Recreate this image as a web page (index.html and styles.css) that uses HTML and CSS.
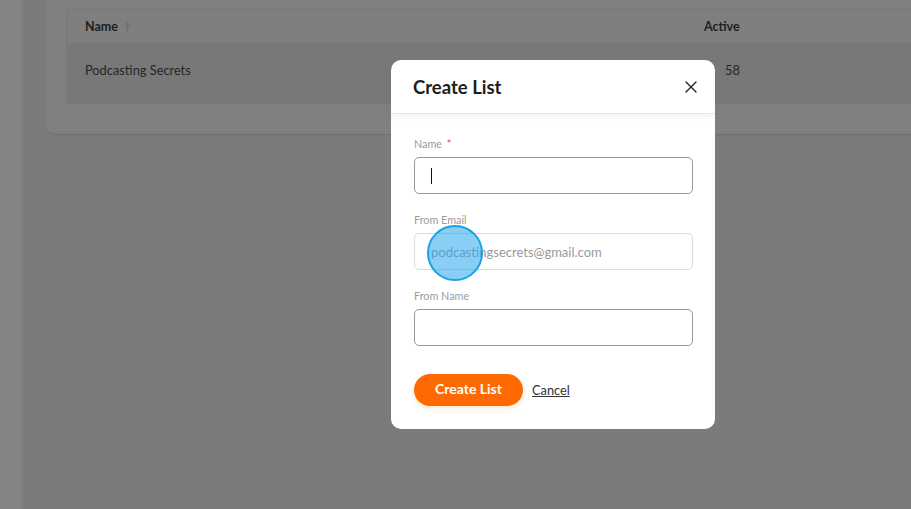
FILE: index.html
```html
<!DOCTYPE html>
<html>
<head>
<meta charset="utf-8">
<link rel="stylesheet" href="styles.css">
</head>
<body>
<div class="page">
  <aside class="side"></aside>
  <main class="main">
    <section class="card">
      <div class="table">
        <div class="thead">
          <div class="th th-name">Name <span class="sort">↑</span></div>
          <div class="th th-active">Active</div>
        </div>
        <div class="trow">
          <div class="td">Podcasting Secrets</div>
          <div class="td td-num">58</div>
        </div>
      </div>
    </section>
  </main>
</div>

<div class="modal">
  <div class="modal-head">
    <h2 class="modal-title">Create List</h2>
    <button class="close" aria-label="Close">
      <svg width="12" height="12" viewBox="0 0 12 12"><path d="M1 1L11 11M11 1L1 11" stroke="#222" stroke-width="1.4" stroke-linecap="round"/></svg>
    </button>
  </div>
  <div class="modal-body">
    <div class="field">
      <label class="label">Name <span class="req">*</span></label>
      <div class="input active"><span class="caret"></span></div>
    </div>
    <div class="field">
      <label class="label">From Email</label>
      <div class="input light"><span class="ph">podcastingsecrets@gmail.com</span></div>
    </div>
    <div class="field">
      <label class="label">From Name</label>
      <div class="input"></div>
    </div>
    <div class="actions">
      <button class="btn">Create List</button>
      <a class="cancel">Cancel</a>
    </div>
  </div>
</div>
<div class="click-dot"></div>
</body>
</html>
```

FILE: styles.css
```css
* { box-sizing: border-box; }
html, body { margin: 0; padding: 0; }
body {
  width: 911px;
  height: 509px;
  overflow: hidden;
  background: #7b7b7c;
  font-family: "Lato", "Noto Sans", sans-serif;
  position: relative;
}
.page { display: flex; height: 509px; }
.side { width: 22px; background: #838384; flex: none; }
.main { flex: 1; padding-left: 23px; overflow: hidden; }
.card {
  margin-top: -20px;
  margin-right: -40px;
  padding: 29px 0 30px 21px;
  background: #808080;
  border-radius: 10px;
  box-shadow: 0 1px 2px rgba(0,0,0,0.12);
}
.thead {
  display: flex;
  align-items: center;
  height: 35px;
  border: 1px solid #787878;
  border-radius: 8px 0 0 0;
  border-right: none;
  background: #7f7f7f;
}
.th {
  font-size: 12.5px;
  font-weight: 700;
  color: #1e1e1e;
}
.th-name { padding-left: 18px; width: 637px; }
.sort { color: #6a6a6a; font-weight: 400; font-size: 11px; margin-left: 2px; }
.trow {
  display: flex;
  align-items: flex-start;
  height: 60px;
  background: #787879;
  padding-top: 18px;
}
.td { font-size: 12.8px; color: #262626; }
.trow .td:first-child { padding-left: 19px; width: 659px; }

.modal {
  position: absolute;
  left: 391px;
  top: 60px;
  width: 324px;
  height: 369px;
  background: #fff;
  border-radius: 10px;
  display: flex;
  flex-direction: column;
}
.modal-head {
  height: 54px;
  display: flex;
  align-items: center;
  justify-content: space-between;
  padding: 0 17px 0 22px;
  border-bottom: 1px solid #e6e6e6;
  box-shadow: 0 3px 6px rgba(0,0,0,0.05);
  border-radius: 10px 10px 0 0;
}
.modal-title {
  margin: 0;
  font-size: 18.5px;
  font-weight: 700;
  color: #1d1d1d;
}
.close {
  border: 0;
  background: none;
  padding: 0;
  width: 14px;
  height: 14px;
  display: flex;
  align-items: center;
  justify-content: center;
}
.modal-body { padding: 23px 22px 0 23px; }
.field { margin-bottom: 19px; }
.label {
  display: block;
  height: 14px;
  line-height: 14px;
  font-size: 10.8px;
  color: #9b9b9b;
  margin-bottom: 6px;
}
.req { color: #e0425a; margin-left: 2px; }
.input {
  height: 37px;
  border: 1px solid #999a9b;
  border-radius: 5px;
  display: flex;
  align-items: center;
  padding-left: 16px;
}
.input.light { border-color: #dcdcdc; }
.caret { width: 1px; height: 16px; background: #111; }
.ph { font-size: 13px; color: #9a9a9a; padding-top: 1px; }
.actions {
  margin-top: 28px;
  display: flex;
  align-items: center;
  gap: 9px;
}
.btn {
  width: 109px;
  height: 32px;
  border: 0;
  border-radius: 16px;
  background: #ff6a00;
  color: #fff;
  font-family: inherit;
  font-size: 14px;
  font-weight: 700;
  padding: 0 0 3px;
  box-shadow: 0 3px 5px rgba(255,106,0,0.15);
}
.cancel {
  font-size: 12.8px;
  color: #333;
  text-decoration: underline;
}
.click-dot {
  position: absolute;
  left: 427px;
  top: 225px;
  width: 56px;
  height: 56px;
  border-radius: 50%;
  background: rgba(40,165,235,0.55);
  border: 2px solid #17a2e6;
}
```
